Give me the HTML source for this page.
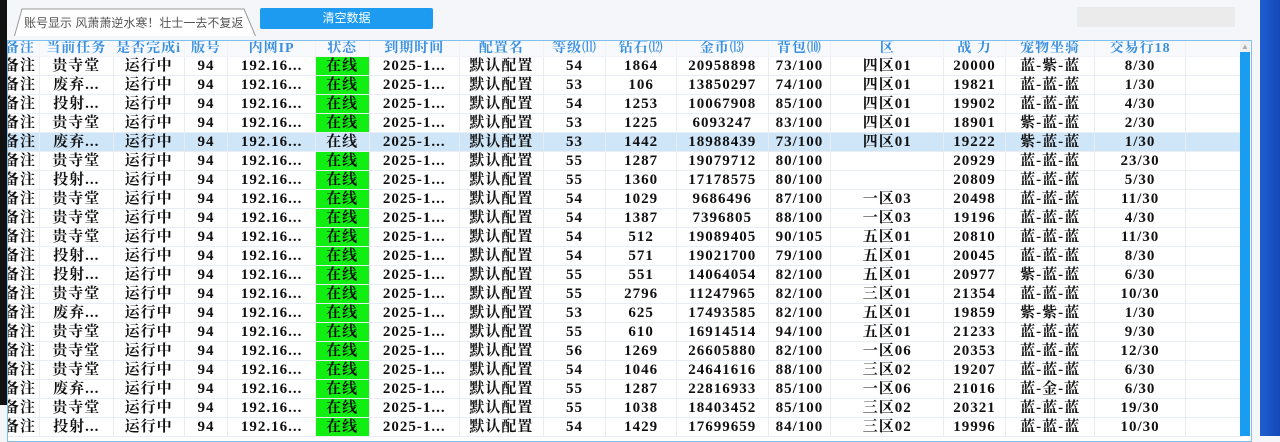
<!DOCTYPE html>
<html><head><meta charset="utf-8"><style>
body{margin:0;width:1280px;height:436px;overflow:hidden;background:#f4f6f9;position:relative;font-family:"Liberation Serif","Noto Serif CJK SC",serif;}
.abs{position:absolute}
#strip{left:0;top:0;width:7px;height:405px;background:#111}
#tab{left:14px;top:8px;width:242px;height:28px}
#btn{left:260px;top:8px;width:173px;height:21px;background:#1c9bf0;border-radius:2px;color:#fff;font:12px "Liberation Sans","Noto Sans CJK SC",sans-serif;text-align:center;line-height:21px}
#gray{left:1077px;top:7px;width:158px;height:20px;background:#ebebeb}
#rblue{left:1260px;top:0;width:20px;height:436px;background:linear-gradient(90deg,#1f5fd0,#1448b8)}
#tbl{left:7px;top:40px;width:1243px;height:400px;background:#fff;border:1px solid #7fc0ee;overflow:hidden}
table{border-collapse:collapse;table-layout:fixed;position:absolute;left:-8px;top:-1px}
td{height:18px;border:1px solid #e8edf4;text-align:center;font-size:15px;letter-spacing:1px;font-weight:bold;color:#111;white-space:nowrap;overflow:hidden;padding:0;line-height:18px}
tr.h td{color:#3a8fe0;height:15px;line-height:15px;font-size:14px;border-color:#f0f3f7;background:#f7f9fc}
tr.sel td{background:#cfe5f8}
td.g{background:#11ee11}
tr.sel td.g{background:#cfe5f8}
#sb{left:1240px;top:52px;width:10px;height:384px;background:#1a9cf0}
#sbt{left:1240px;top:41px;width:10px;height:11px;background:#f0f0f0;color:#aaa;font-size:8px;text-align:center;line-height:11px}
</style></head><body>
<div class="abs" id="strip"></div>
<svg class="abs" id="tab" viewBox="0 0 242 28"><path d="M0.5 28 L8 1 L230 1 L241.5 28" fill="#fff" stroke="#999"/><text x="10" y="19" font-size="12" fill="#555" font-family="Liberation Sans,Noto Sans CJK SC,sans-serif">账号显示  风萧萧逆水寒！壮士一去不复返</text></svg>
<div class="abs" id="btn">清空数据</div>
<div class="abs" id="gray"></div>
<div class="abs" id="tbl">
<table>
<colgroup><col style="width:39px"><col style="width:74px"><col style="width:71px"><col style="width:44px"><col style="width:88px"><col style="width:54px"><col style="width:91px"><col style="width:84px"><col style="width:63px"><col style="width:71px"><col style="width:92px"><col style="width:63px"><col style="width:114px"><col style="width:62px"><col style="width:90px"><col style="width:91px"><col style="width:58px"></colgroup>
<tr class="h"><td>备注</td><td>当前任务</td><td>是否完成i</td><td>版号</td><td>内网IP</td><td>状态</td><td>到期时间</td><td>配置名</td><td>等级⑾</td><td>钻石⑿</td><td>金币⒀</td><td>背包⑽</td><td>区</td><td>战 力</td><td>宠物坐骑</td><td>交易行18</td><td></td></tr>
<tr><td>备注</td><td>贵寺堂</td><td>运行中</td><td>94</td><td>192.16...</td><td class="g">在线</td><td>2025-1...</td><td>默认配置</td><td>54</td><td>1864</td><td>20958898</td><td>73/100</td><td>四区01</td><td>20000</td><td>蓝-紫-蓝</td><td>8/30</td><td></td></tr>
<tr><td>备注</td><td>废弃...</td><td>运行中</td><td>94</td><td>192.16...</td><td class="g">在线</td><td>2025-1...</td><td>默认配置</td><td>53</td><td>106</td><td>13850297</td><td>74/100</td><td>四区01</td><td>19821</td><td>蓝-蓝-蓝</td><td>1/30</td><td></td></tr>
<tr><td>备注</td><td>投射...</td><td>运行中</td><td>94</td><td>192.16...</td><td class="g">在线</td><td>2025-1...</td><td>默认配置</td><td>54</td><td>1253</td><td>10067908</td><td>85/100</td><td>四区01</td><td>19902</td><td>蓝-蓝-蓝</td><td>4/30</td><td></td></tr>
<tr><td>备注</td><td>贵寺堂</td><td>运行中</td><td>94</td><td>192.16...</td><td class="g">在线</td><td>2025-1...</td><td>默认配置</td><td>53</td><td>1225</td><td>6093247</td><td>83/100</td><td>四区01</td><td>18901</td><td>紫-蓝-蓝</td><td>2/30</td><td></td></tr>
<tr class="sel"><td>备注</td><td>废弃...</td><td>运行中</td><td>94</td><td>192.16...</td><td class="g">在线</td><td>2025-1...</td><td>默认配置</td><td>53</td><td>1442</td><td>18988439</td><td>73/100</td><td>四区01</td><td>19222</td><td>紫-蓝-蓝</td><td>1/30</td><td></td></tr>
<tr><td>备注</td><td>贵寺堂</td><td>运行中</td><td>94</td><td>192.16...</td><td class="g">在线</td><td>2025-1...</td><td>默认配置</td><td>55</td><td>1287</td><td>19079712</td><td>80/100</td><td></td><td>20929</td><td>蓝-蓝-蓝</td><td>23/30</td><td></td></tr>
<tr><td>备注</td><td>投射...</td><td>运行中</td><td>94</td><td>192.16...</td><td class="g">在线</td><td>2025-1...</td><td>默认配置</td><td>55</td><td>1360</td><td>17178575</td><td>80/100</td><td></td><td>20809</td><td>蓝-蓝-蓝</td><td>5/30</td><td></td></tr>
<tr><td>备注</td><td>贵寺堂</td><td>运行中</td><td>94</td><td>192.16...</td><td class="g">在线</td><td>2025-1...</td><td>默认配置</td><td>54</td><td>1029</td><td>9686496</td><td>87/100</td><td>一区03</td><td>20498</td><td>蓝-蓝-蓝</td><td>11/30</td><td></td></tr>
<tr><td>备注</td><td>贵寺堂</td><td>运行中</td><td>94</td><td>192.16...</td><td class="g">在线</td><td>2025-1...</td><td>默认配置</td><td>54</td><td>1387</td><td>7396805</td><td>88/100</td><td>一区03</td><td>19196</td><td>蓝-蓝-蓝</td><td>4/30</td><td></td></tr>
<tr><td>备注</td><td>贵寺堂</td><td>运行中</td><td>94</td><td>192.16...</td><td class="g">在线</td><td>2025-1...</td><td>默认配置</td><td>54</td><td>512</td><td>19089405</td><td>90/105</td><td>五区01</td><td>20810</td><td>蓝-蓝-蓝</td><td>11/30</td><td></td></tr>
<tr><td>备注</td><td>投射...</td><td>运行中</td><td>94</td><td>192.16...</td><td class="g">在线</td><td>2025-1...</td><td>默认配置</td><td>54</td><td>571</td><td>19021700</td><td>79/100</td><td>五区01</td><td>20045</td><td>蓝-蓝-蓝</td><td>8/30</td><td></td></tr>
<tr><td>备注</td><td>投射...</td><td>运行中</td><td>94</td><td>192.16...</td><td class="g">在线</td><td>2025-1...</td><td>默认配置</td><td>55</td><td>551</td><td>14064054</td><td>82/100</td><td>五区01</td><td>20977</td><td>紫-蓝-蓝</td><td>6/30</td><td></td></tr>
<tr><td>备注</td><td>贵寺堂</td><td>运行中</td><td>94</td><td>192.16...</td><td class="g">在线</td><td>2025-1...</td><td>默认配置</td><td>55</td><td>2796</td><td>11247965</td><td>82/100</td><td>三区01</td><td>21354</td><td>蓝-蓝-蓝</td><td>10/30</td><td></td></tr>
<tr><td>备注</td><td>废弃...</td><td>运行中</td><td>94</td><td>192.16...</td><td class="g">在线</td><td>2025-1...</td><td>默认配置</td><td>53</td><td>625</td><td>17493585</td><td>82/100</td><td>五区01</td><td>19859</td><td>紫-紫-蓝</td><td>1/30</td><td></td></tr>
<tr><td>备注</td><td>贵寺堂</td><td>运行中</td><td>94</td><td>192.16...</td><td class="g">在线</td><td>2025-1...</td><td>默认配置</td><td>55</td><td>610</td><td>16914514</td><td>94/100</td><td>五区01</td><td>21233</td><td>蓝-蓝-蓝</td><td>9/30</td><td></td></tr>
<tr><td>备注</td><td>贵寺堂</td><td>运行中</td><td>94</td><td>192.16...</td><td class="g">在线</td><td>2025-1...</td><td>默认配置</td><td>56</td><td>1269</td><td>26605880</td><td>82/100</td><td>一区06</td><td>20353</td><td>蓝-蓝-蓝</td><td>12/30</td><td></td></tr>
<tr><td>备注</td><td>贵寺堂</td><td>运行中</td><td>94</td><td>192.16...</td><td class="g">在线</td><td>2025-1...</td><td>默认配置</td><td>54</td><td>1046</td><td>24641616</td><td>88/100</td><td>三区02</td><td>19207</td><td>蓝-蓝-蓝</td><td>6/30</td><td></td></tr>
<tr><td>备注</td><td>废弃...</td><td>运行中</td><td>94</td><td>192.16...</td><td class="g">在线</td><td>2025-1...</td><td>默认配置</td><td>55</td><td>1287</td><td>22816933</td><td>85/100</td><td>一区06</td><td>21016</td><td>蓝-金-蓝</td><td>6/30</td><td></td></tr>
<tr><td>备注</td><td>贵寺堂</td><td>运行中</td><td>94</td><td>192.16...</td><td class="g">在线</td><td>2025-1...</td><td>默认配置</td><td>55</td><td>1038</td><td>18403452</td><td>85/100</td><td>三区02</td><td>20321</td><td>蓝-蓝-蓝</td><td>19/30</td><td></td></tr>
<tr><td>备注</td><td>投射...</td><td>运行中</td><td>94</td><td>192.16...</td><td class="g">在线</td><td>2025-1...</td><td>默认配置</td><td>54</td><td>1429</td><td>17699659</td><td>84/100</td><td>三区02</td><td>19996</td><td>蓝-蓝-蓝</td><td>10/30</td><td></td></tr>
</table>
</div>
<div class="abs" id="sbt">▲</div>
<div class="abs" id="sb"></div>
<div class="abs" id="rblue"></div>
</body></html>
